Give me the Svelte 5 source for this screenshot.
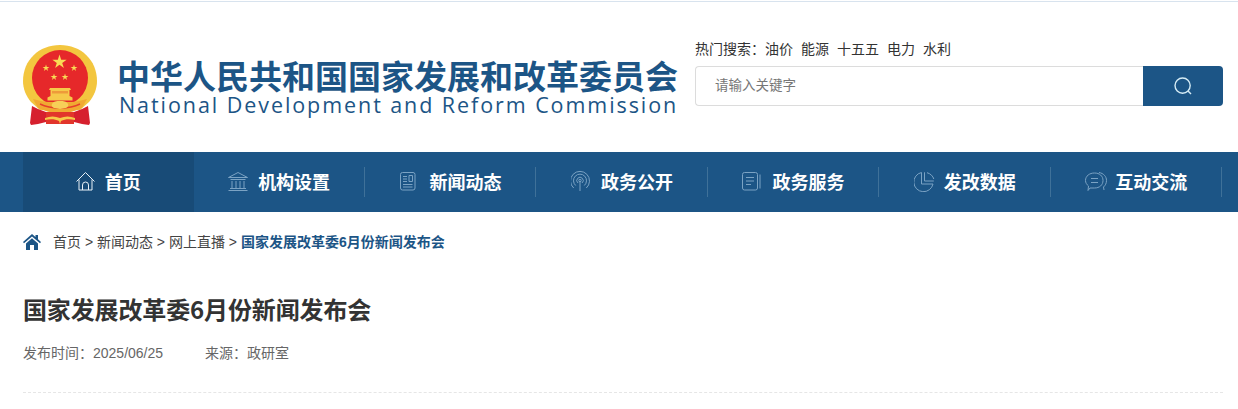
<script>
  const hotWords = ['油价', '能源', '十五五', '电力', '水利'];
  const navItems = [
    { label: '首页', icon: 'home', active: true },
    { label: '机构设置', icon: 'bank' },
    { label: '新闻动态', icon: 'news' },
    { label: '政务公开', icon: 'signal' },
    { label: '政务服务', icon: 'book' },
    { label: '发改数据', icon: 'pie' },
    { label: '互动交流', icon: 'chat' }
  ];
  const stars = [
    [36.5, 17, 7.5],
    [23, 23, 3.6],
    [51, 23, 3.6],
    [31, 32, 3.6],
    [42, 32, 3.6]
  ];

  function starPath(cx, cy, r) {
    let d = '';
    for (let i = 0; i < 10; i++) {
      const rad = i % 2 ? r * 0.38 : r;
      const a = (Math.PI / 5) * i - Math.PI / 2;
      d += (i ? 'L' : 'M') + (cx + rad * Math.cos(a)).toFixed(2) + ' ' + (cy + rad * Math.sin(a)).toFixed(2);
    }
    return d + 'z';
  }
</script>

<div class="topline"></div>

<header class="header">
  <div class="brand">
    <svg class="emblem" viewBox="0 0 74 80" width="74" height="80">
      <path d="M37 0C16 0 0 15 0 36c0 8 3 15 8 21l9 8h40l9-8c5-6 8-13 8-21C74 15 58 0 37 0z" fill="#f3c63f" />
      <circle cx="37" cy="33" r="28" fill="#e6282a" />
      <!-- gate -->
      <path d="M27 43h20l1 2h-1.500v6l3 1.500v3h-25v-3l3-1.500v-6H26z" fill="#f6c94a" />
      <path d="M29 46h16v2.500H29z" fill="#ee9a3a" />
      <!-- wheat band -->
      <path d="M10 54c7 2 12 3 15 3h24c3 0 8-1 15-3l-5 9c-6 3-14 5-22 5s-16-2-22-5z" fill="#f0a932" />
      <path d="M17 59c6 3 13 4 20 4s14-1 20-4" fill="none" stroke="#e6402a" stroke-width="1.400" />
      <!-- ribbons -->
      <path d="M9 61l6 3 8 3v10l-8 2-7 1-1-2z" fill="#d6202e" />
      <path d="M65 61l-6 3-8 3v10l8 2 7 1 1-2z" fill="#d6202e" />
      <path d="M23 67h28v12H23z" fill="#e2352b" />
      <path d="M22 73c5-2 10-2 15 0 5-2 10-2 15 0v2c-5-1-10-1-14 1l-1 3-1-3c-4-2-9-2-14-1z" fill="#f6c94a" />
      <path d="M29 59c2-3 4-3 8-3s6 0 8 3c1 2-1 4-3 4l-5 1-5-1c-2 0-4-2-3-4z" fill="#f7cf58" />
      {#each stars as [cx, cy, r]}
        <path d={starPath(cx, cy, r)} fill="#f9db55" />
      {/each}
    </svg>
    <div class="brand-text">
      <div class="cn">中华人民共和国国家发展和改革委员会</div>
      <div class="en">National Development and Reform Commission</div>
    </div>
  </div>

  <div class="search">
    <div class="hot">
      <span>热门搜索：</span>
      {#each hotWords as word}
        <a href="#top">{word}</a>
      {/each}
    </div>
    <div class="search-box">
      <div class="input">请输入关键字</div>
      <button class="search-btn" aria-label="搜索">
        <svg viewBox="0 0 20 20" width="20" height="20" fill="none" stroke="#d6ecf5" stroke-width="1.4">
          <circle cx="9.600" cy="9.600" r="7.600" />
          <path d="M15 15l3 3" />
        </svg>
      </button>
    </div>
  </div>
</header>

<nav class="nav">
  <ul class="nav-list">
    {#each navItems as item}
      <li class:active={item.active}>
        <svg class="nav-icon" viewBox="0 0 22 22" width="22" height="22" fill="none" stroke={item.active ? '#e8f1f7' : '#7ba3c4'} stroke-width="1">
          {#if item.icon === 'home'}
            <path d="M1.500 11.500L10.500 2.500l9 9M4 9.500V20h13V9.500M7.500 20v-5a3 3 0 0 1 6 0v5" />
          {:else if item.icon === 'bank'}
            <path d="M.5 7.500L10 2.500l9.500 5zM2.500 9.500h15M4 11v7M8 11v7M12 11v7M16 11v7M2 18.500h16M.5 20.500h19" />
          {:else if item.icon === 'news'}
            <rect x=".5" y="2.500" width="14.500" height="17.500" rx="2" />
            <path d="M3 6.500h4M3 9h4M3 11.500h4M9 5.500h3.500v6H9zM3 14.500h9.500M3 17h9.500" />
          {:else if item.icon === 'signal'}
            <path d="M9 11v10M4.700 15.500a6.500 6.500 0 1 1 8.600 0M2.700 18a9.500 9.500 0 1 1 12.600 0M7 13a3.200 3.200 0 1 1 4 0" />
            <circle cx="9" cy="10.500" r="1.200" />
          {:else if item.icon === 'book'}
            <rect x=".5" y="2.500" width="15" height="17.500" rx="2" />
            <path d="M4 7.500h8M4 11h8M4 14.500h5M18 4.500v14" />
          {:else if item.icon === 'pie'}
            <path d="M8 2.500a9.700 9.700 0 1 0 11.500 11.500H8z" transform="translate(-.5 0)" />
            <path d="M10.500 2.300v8.700h9.300" />
            <path d="M13 2.700c3.500.9 6 3.500 6.800 6.300" />
          {:else}
            <path d="M9.500 3C14.500 3 18 6 18 10.500S14.500 18 9.500 18H5l-2 2.500.5-4.500C1.700 14.500.5 12.700.5 10.500.5 6 4.500 3 9.500 3z" />
            <path d="M14 2.500c4.500.8 7.500 4 7.500 8 0 2.800-1.200 5-3 6.500l.5 3" />
            <path d="M6 8.500h7M6 12.500h7" />
          {/if}
        </svg>
        <span>{item.label}</span>
      </li>
    {/each}
  </ul>
</nav>

<main class="main">
  <div class="crumbs">
    <svg viewBox="0 0 18 16" width="18" height="16" fill="#1c5586">
      <path d="M9 0L0 8l1 1.300L9 2.500l8 6.800L18 8l-3-2.700V1h-2.500v2.100z" />
      <path d="M3 9.500L9 4.300l6 5.200V16h-4v-5H7v5H3z" />
    </svg>
    <span class="trail">
      <a href="#top">首页</a> &gt; <a href="#top">新闻动态</a> &gt; <a href="#top">网上直播</a> &gt; <a class="current" href="#top">国家发展改革委6月份新闻发布会</a>
    </span>
  </div>

  <h1 class="title">国家发展改革委6月份新闻发布会</h1>

  <div class="meta">
    <span>发布时间：2025/06/25</span>
    <span>来源：政研室</span>
  </div>

  <div class="divider"></div>
</main>

<style>
  :global(body) {
    background: #fff;
    font-family: "Liberation Sans", "Noto Sans CJK SC", sans-serif;
    color: #333;
    overflow: hidden;
  }

  a {
    color: inherit;
    text-decoration: none;
  }

  .topline {
    height: 1px;
    margin-top: 1px;
    background: #d8e3ee;
  }

  .header {
    display: flex;
    justify-content: space-between;
    height: 150px;
    padding: 0 15px 0 23px;
  }

  .brand {
    display: flex;
    align-items: flex-start;
    padding-top: 43px;
  }

  .emblem {
    flex: none;
  }

  .brand-text {
    margin-left: 20px;
    padding-top: 12px;
    color: #1c5586;
  }

  .cn {
    font-family: "Noto Sans CJK SC", sans-serif;
    font-size: 33px;
    font-weight: 700;
    line-height: 36px;
    white-space: nowrap;
  }

  .en {
    padding-left: 2px;
    font-family: "Open Sans", sans-serif;
    font-size: 21.500px;
    line-height: 24px;
    letter-spacing: 1.930px;
    white-space: nowrap;
  }

  .search {
    width: 528px;
    padding-top: 37px;
  }

  .hot {
    display: flex;
    font-family: "Noto Sans CJK SC", sans-serif;
    font-size: 14px;
    line-height: 18px;
    height: 27px;
    color: #333;
  }

  .hot a {
    margin-right: 8px;
  }

  .search-box {
    display: flex;
    height: 40px;
  }

  .input {
    flex: 1;
    box-sizing: border-box;
    padding-left: 19px;
    border: 1px solid #dcdcdc;
    border-right: 0;
    border-radius: 4px 0 0 4px;
    font-family: "Noto Sans CJK SC", sans-serif;
    font-size: 13.500px;
    line-height: 34px;
    color: #777;
  }

  .search-btn {
    display: flex;
    align-items: center;
    justify-content: center;
    width: 80px;
    padding: 0;
    border: 0;
    border-radius: 0 4px 4px 0;
    background: #1c5586;
  }

  .nav {
    height: 60px;
    padding: 0 15px 0 23px;
    background: #1c5586;
  }

  .nav-list {
    display: flex;
    height: 60px;
    margin: 0;
    padding: 0;
    list-style: none;
  }

  .nav-list li {
    position: relative;
    display: flex;
    flex: 1;
    align-items: center;
    justify-content: center;
    gap: 8px;
    box-sizing: border-box;
    padding: 0 2px 2px 0;
    color: #fff;
    font-family: "Noto Sans CJK SC", sans-serif;
    font-size: 18px;
    font-weight: 700;
  }

  .nav-list li::after {
    content: '';
    position: absolute;
    right: 1px;
    top: 15px;
    height: 30px;
    width: 1px;
    background: #3f7199;
  }

  .nav-list li:first-child::after {
    display: none;
  }

  .nav-list li.active {
    background: #184b77;
  }

  .main {
    padding: 0 15px 0 23px;
  }

  .crumbs {
    display: flex;
    align-items: center;
    gap: 12px;
    height: 60px;
    padding-bottom: 2px;
    box-sizing: border-box;
    font-size: 14px;
    color: #444;
  }

  .crumbs svg {
    margin-top: 2px;
  }

  .current {
    color: #1c5586;
    font-weight: 700;
  }

  .title {
    margin: 21px 0 0;
    font-family: "Noto Sans CJK SC", sans-serif;
    font-size: 24px;
    font-weight: 700;
    line-height: 32px;
    letter-spacing: -0.130px;
    color: #333;
  }

  .meta {
    display: flex;
    gap: 42px;
    margin-top: 18px;
    font-size: 14px;
    line-height: 20px;
    color: #666;
  }

  .divider {
    margin-top: 29px;
    border-top: 1px dashed #e6e6e6;
  }
</style>
